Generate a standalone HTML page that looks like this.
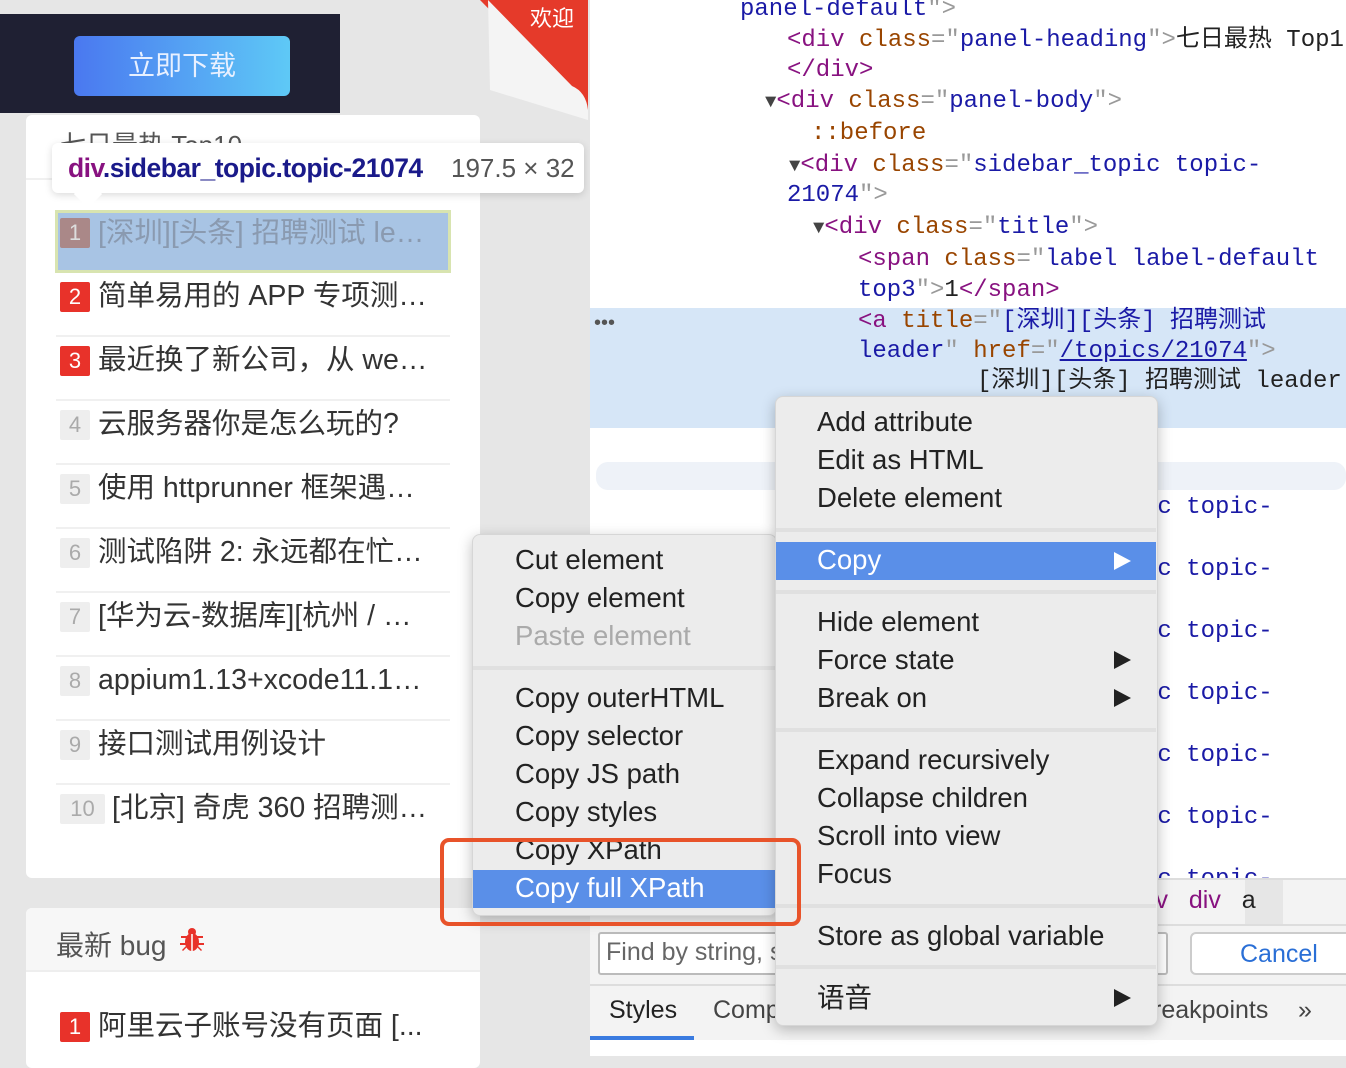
<!DOCTYPE html>
<html><head><meta charset="utf-8">
<style>
*{margin:0;padding:0;box-sizing:border-box}
body{width:1346px;height:1056px;overflow:hidden;position:relative;background:#e6e6e6;font-family:"Liberation Sans","Noto Sans CJK SC",sans-serif}
.a{position:absolute;white-space:nowrap}
.card{position:absolute;background:#fff;border-radius:6px}
.badge{position:absolute;left:60px;width:30px;height:30px;font-size:22px;line-height:30px;text-align:center;border-radius:2px}
.r{background:#e8322a;color:#fff}
.g{background:#eeeeee;color:#aaa}
.it{position:absolute;left:98px;font-size:28.5px;color:#333;line-height:30px}
.sep{position:absolute;left:56px;width:394px;height:2px;background:#f0f0f0}
.code{position:absolute;font-family:"Liberation Mono","Noto Sans CJK SC",monospace;font-size:24px;line-height:31px;white-space:nowrap;color:#222}
.t{color:#881280}.at{color:#994500}.v{color:#1a1aa6}.p{color:#999}
.tri{font-size:19px;color:#444}
.menu{position:absolute;background:#ececec;border-radius:8px;box-shadow:0 4px 14px rgba(0,0,0,.25);border:1px solid #d6d6d6}
.mi{position:absolute;font-size:27.5px;color:#222;white-space:nowrap;line-height:38px}
.hl{position:absolute;background:#5a8fe8}
.ms{position:absolute;height:4px;background:#e0e0e0}
.arr{position:absolute;width:0;height:0;border-top:9px solid transparent;border-bottom:9px solid transparent;border-left:17px solid #222}
</style></head><body>

<div class="a" style="left:0;top:14px;width:340px;height:99px;background:#1f2033"></div>
<div class="a" style="left:74px;top:36px;width:216px;height:60px;border-radius:6px;background:linear-gradient(90deg,#4a78f0,#5ec9f6);color:#e8f0ff;font-size:27px;text-align:center;line-height:60px">立即下载</div>

<svg class="a" style="left:480px;top:0" width="110" height="120">
<polygon points="0,0 108,0 108,110" fill="#e53a2a"/>
<path d="M8,0 L92,86 Q106,92 108,110 L108,120 L10,90 Z" fill="#f4f4f4"/>
<text x="72" y="26" font-size="22" fill="#fff" text-anchor="middle" font-family="Noto Sans CJK SC,sans-serif">欢迎</text>
</svg>

<div class="card" style="left:26px;top:115px;width:454px;height:763px"></div>
<div class="a" style="left:60px;top:125px;font-size:26px;color:#555">七日最热 Top10</div>
<div class="sep" style="left:26px;width:454px;top:178px"></div>

<div class="a" style="left:55px;top:210px;width:396px;height:63px;background:#a8c4e4;border:3px solid #d8e4b0"></div>
<div class="badge" style="top:218px;background:#a88;color:#ddd">1</div>
<div class="it" style="top:218px;color:#8a9ab0">[深圳][头条] 招聘测试 le…</div>

<div class="a" style="left:52px;top:143px;width:532px;height:50px;background:#fff;border-radius:6px;box-shadow:0 2px 8px rgba(0,0,0,.15)"></div>
<div class="a" style="left:78px;top:184px;width:20px;height:20px;background:#fff;transform:rotate(45deg)"></div>
<div class="a" style="left:68px;top:153px;font-size:26.5px;font-weight:bold;color:#1a1a8a;letter-spacing:-0.5px"><span style="color:#881280">div</span>.sidebar_topic.topic-21074</div>
<div class="a" style="left:451px;top:153px;font-size:26px;color:#555">197.5 × 32</div>

<div class="badge r" style="top:282px">2</div><div class="it" style="top:281px">简单易用的 APP 专项测…</div><div class="sep" style="top:335px"></div>
<div class="badge r" style="top:346px">3</div><div class="it" style="top:345px">最近换了新公司，从 we…</div><div class="sep" style="top:399px"></div>
<div class="badge g" style="top:410px">4</div><div class="it" style="top:409px">云服务器你是怎么玩的?</div><div class="sep" style="top:463px"></div>
<div class="badge g" style="top:474px">5</div><div class="it" style="top:473px">使用 httprunner 框架遇…</div><div class="sep" style="top:527px"></div>
<div class="badge g" style="top:538px">6</div><div class="it" style="top:537px">测试陷阱 2: 永远都在忙…</div><div class="sep" style="top:591px"></div>
<div class="badge g" style="top:602px">7</div><div class="it" style="top:601px">[华为云-数据库][杭州 / …</div><div class="sep" style="top:655px"></div>
<div class="badge g" style="top:666px">8</div><div class="it" style="top:665px">appium1.13+xcode11.1…</div><div class="sep" style="top:719px"></div>
<div class="badge g" style="top:730px">9</div><div class="it" style="top:729px">接口测试用例设计</div><div class="sep" style="top:783px"></div>
<div class="badge g" style="top:794px;width:45px">10</div><div class="it" style="top:793px;left:112px">[北京] 奇虎 360 招聘测…</div>

<div class="card" style="left:26px;top:908px;width:454px;height:160px;overflow:hidden"><div style="height:64px;background:#f7f7f7;border-bottom:2px solid #eee"></div></div>
<div class="a" style="left:56px;top:924px;font-size:28px;color:#555">最新 bug</div>
<svg class="a" style="left:178px;top:926px" width="28" height="28" viewBox="0 0 28 28"><g fill="#e8322a"><ellipse cx="14" cy="16" rx="7" ry="9"/><circle cx="14" cy="6" r="4"/><path d="M3 10h22v2H3zM2 17h24v2H2zM4 24l4-4 1 1-4 4zM24 24l-4-4-1 1 4 4z"/></g><path d="M14 8v17" stroke="#fff" stroke-width="1.5"/></svg>
<div class="badge r" style="top:1012px">1</div><div class="it" style="top:1011px">阿里云子账号没有页面 [...</div>

<div class="a" style="left:590px;top:0;width:756px;height:1056px;background:#fff"></div>
<div class="a" style="left:590px;top:308px;width:756px;height:120px;background:#d6e6f7"></div>
<div class="a" style="left:596px;top:462px;width:750px;height:28px;background:#eef2f8;border-radius:12px"></div>
<div class="a" style="left:594px;top:312px;font-size:20px;color:#555">•••</div>

<div class="code" style="left:740px;top:-6px"><span class="v">panel-default</span><span class="p">"&gt;</span></div>
<div class="code" style="left:787px;top:25px"><span class="t">&lt;div</span> <span class="at">class</span><span class="p">="</span><span class="v">panel-heading</span><span class="p">"&gt;</span>七日最热 Top1</div>
<div class="code" style="left:787px;top:55px"><span class="t">&lt;/div&gt;</span></div>
<div class="code" style="left:765px;top:86px"><span class="tri">▼</span><span class="t">&lt;div</span> <span class="at">class</span><span class="p">="</span><span class="v">panel-body</span><span class="p">"&gt;</span></div>
<div class="code" style="left:811px;top:118px"><span class="at">::before</span></div>
<div class="code" style="left:789px;top:150px"><span class="tri">▼</span><span class="t">&lt;div</span> <span class="at">class</span><span class="p">="</span><span class="v">sidebar_topic topic-</span></div>
<div class="code" style="left:787px;top:180px"><span class="v">21074</span><span class="p">"&gt;</span></div>
<div class="code" style="left:813px;top:212px"><span class="tri">▼</span><span class="t">&lt;div</span> <span class="at">class</span><span class="p">="</span><span class="v">title</span><span class="p">"&gt;</span></div>
<div class="code" style="left:858px;top:244px"><span class="t">&lt;span</span> <span class="at">class</span><span class="p">="</span><span class="v">label label-default</span></div>
<div class="code" style="left:858px;top:275px"><span class="v">top3</span><span class="p">"&gt;</span>1<span class="t">&lt;/span&gt;</span></div>
<div class="code" style="left:858px;top:306px"><span class="t">&lt;a</span> <span class="at">title</span><span class="p">="</span><span class="v">[深圳][头条] 招聘测试</span></div>
<div class="code" style="left:858px;top:336px"><span class="v">leader</span><span class="p">"</span> <span class="at">href</span><span class="p">="</span><span class="v" style="text-decoration:underline">/topics/21074</span><span class="p">"&gt;</span></div>
<div class="code" style="left:977px;top:366px">[深圳][头条] 招聘测试 leader</div>
<div class="code" style="left:1143px;top:492px"><span class="v">ic topic-</span></div>
<div class="code" style="left:1143px;top:554px"><span class="v">ic topic-</span></div>
<div class="code" style="left:1143px;top:616px"><span class="v">ic topic-</span></div>
<div class="code" style="left:1143px;top:678px"><span class="v">ic topic-</span></div>
<div class="code" style="left:1143px;top:740px"><span class="v">ic topic-</span></div>
<div class="code" style="left:1143px;top:802px"><span class="v">ic topic-</span></div>
<div class="code" style="left:1143px;top:864px"><span class="v">ic topic-</span></div>

<div class="a" style="left:590px;top:878px;width:756px;height:178px;background:#f3f3f3;border-top:2px solid #ddd"></div>
<div class="a" style="left:1245px;top:880px;width:38px;height:44px;background:#e6e6e6"></div>
<div class="a" style="left:1150px;top:886px;font-size:25px;color:#881280">iv&nbsp;&nbsp;&nbsp;div&nbsp;&nbsp;&nbsp;<span style="color:#222">a</span></div>
<div class="a" style="left:590px;top:924px;width:756px;height:2px;background:#ddd"></div>
<div class="a" style="left:598px;top:932px;width:570px;height:43px;background:#fff;border:2px solid #bbb;border-radius:3px"></div>
<div class="a" style="left:606px;top:938px;font-size:25px;color:#666">Find by string, s</div>
<div class="a" style="left:1190px;top:932px;width:170px;height:43px;background:#fff;border:2px solid #ccc;border-radius:6px;color:#2a6fd6;font-size:25px;line-height:40px;padding-left:48px">Cancel</div>
<div class="a" style="left:590px;top:984px;width:756px;height:2px;background:#ddd"></div>
<div class="a" style="left:609px;top:996px;font-size:25px;color:#222">Styles</div>
<div class="a" style="left:713px;top:996px;font-size:25px;color:#444">Comp</div>
<div class="a" style="left:1153px;top:996px;font-size:25px;color:#444">reakpoints</div>
<div class="a" style="left:1298px;top:996px;font-size:25px;color:#444">»</div>
<div class="a" style="left:590px;top:1036px;width:104px;height:4px;background:#3a7be0"></div>
<div class="a" style="left:590px;top:1040px;width:756px;height:16px;background:#fff"></div>

<div class="menu" style="left:472px;top:534px;width:305px;height:382px"></div>
<div class="mi" style="left:515px;top:541px">Cut element</div>
<div class="mi" style="left:515px;top:579px">Copy element</div>
<div class="mi" style="left:515px;top:617px;color:#aaa">Paste element</div>
<div class="ms" style="left:473px;top:666px;width:302px"></div>
<div class="mi" style="left:515px;top:679px">Copy outerHTML</div>
<div class="mi" style="left:515px;top:717px">Copy selector</div>
<div class="mi" style="left:515px;top:755px">Copy JS path</div>
<div class="mi" style="left:515px;top:793px">Copy styles</div>
<div class="mi" style="left:515px;top:831px">Copy XPath</div>
<div class="hl" style="left:473px;top:870px;width:302px;height:38px"></div>
<div class="mi" style="left:515px;top:869px;color:#fff">Copy full XPath</div>

<div class="menu" style="left:775px;top:396px;width:383px;height:630px"></div>
<div class="mi" style="left:817px;top:403px">Add attribute</div>
<div class="mi" style="left:817px;top:441px">Edit as HTML</div>
<div class="mi" style="left:817px;top:479px">Delete element</div>
<div class="ms" style="left:776px;top:528px;width:380px"></div>
<div class="hl" style="left:776px;top:542px;width:380px;height:38px"></div>
<div class="mi" style="left:817px;top:541px;color:#fff">Copy</div>
<div class="arr" style="left:1114px;top:552px;border-left-color:#fff"></div>
<div class="ms" style="left:776px;top:590px;width:380px"></div>
<div class="mi" style="left:817px;top:603px">Hide element</div>
<div class="mi" style="left:817px;top:641px">Force state</div>
<div class="arr" style="left:1114px;top:651px"></div>
<div class="mi" style="left:817px;top:679px">Break on</div>
<div class="arr" style="left:1114px;top:689px"></div>
<div class="ms" style="left:776px;top:728px;width:380px"></div>
<div class="mi" style="left:817px;top:741px">Expand recursively</div>
<div class="mi" style="left:817px;top:779px">Collapse children</div>
<div class="mi" style="left:817px;top:817px">Scroll into view</div>
<div class="mi" style="left:817px;top:855px">Focus</div>
<div class="ms" style="left:776px;top:904px;width:380px"></div>
<div class="mi" style="left:817px;top:917px">Store as global variable</div>
<div class="ms" style="left:776px;top:965px;width:380px"></div>
<div class="mi" style="left:817px;top:979px">语音</div>
<div class="arr" style="left:1114px;top:989px"></div>

<div class="a" style="left:440px;top:838px;width:361px;height:88px;border:4px solid #e8532a;border-radius:9px"></div>

</body></html>
